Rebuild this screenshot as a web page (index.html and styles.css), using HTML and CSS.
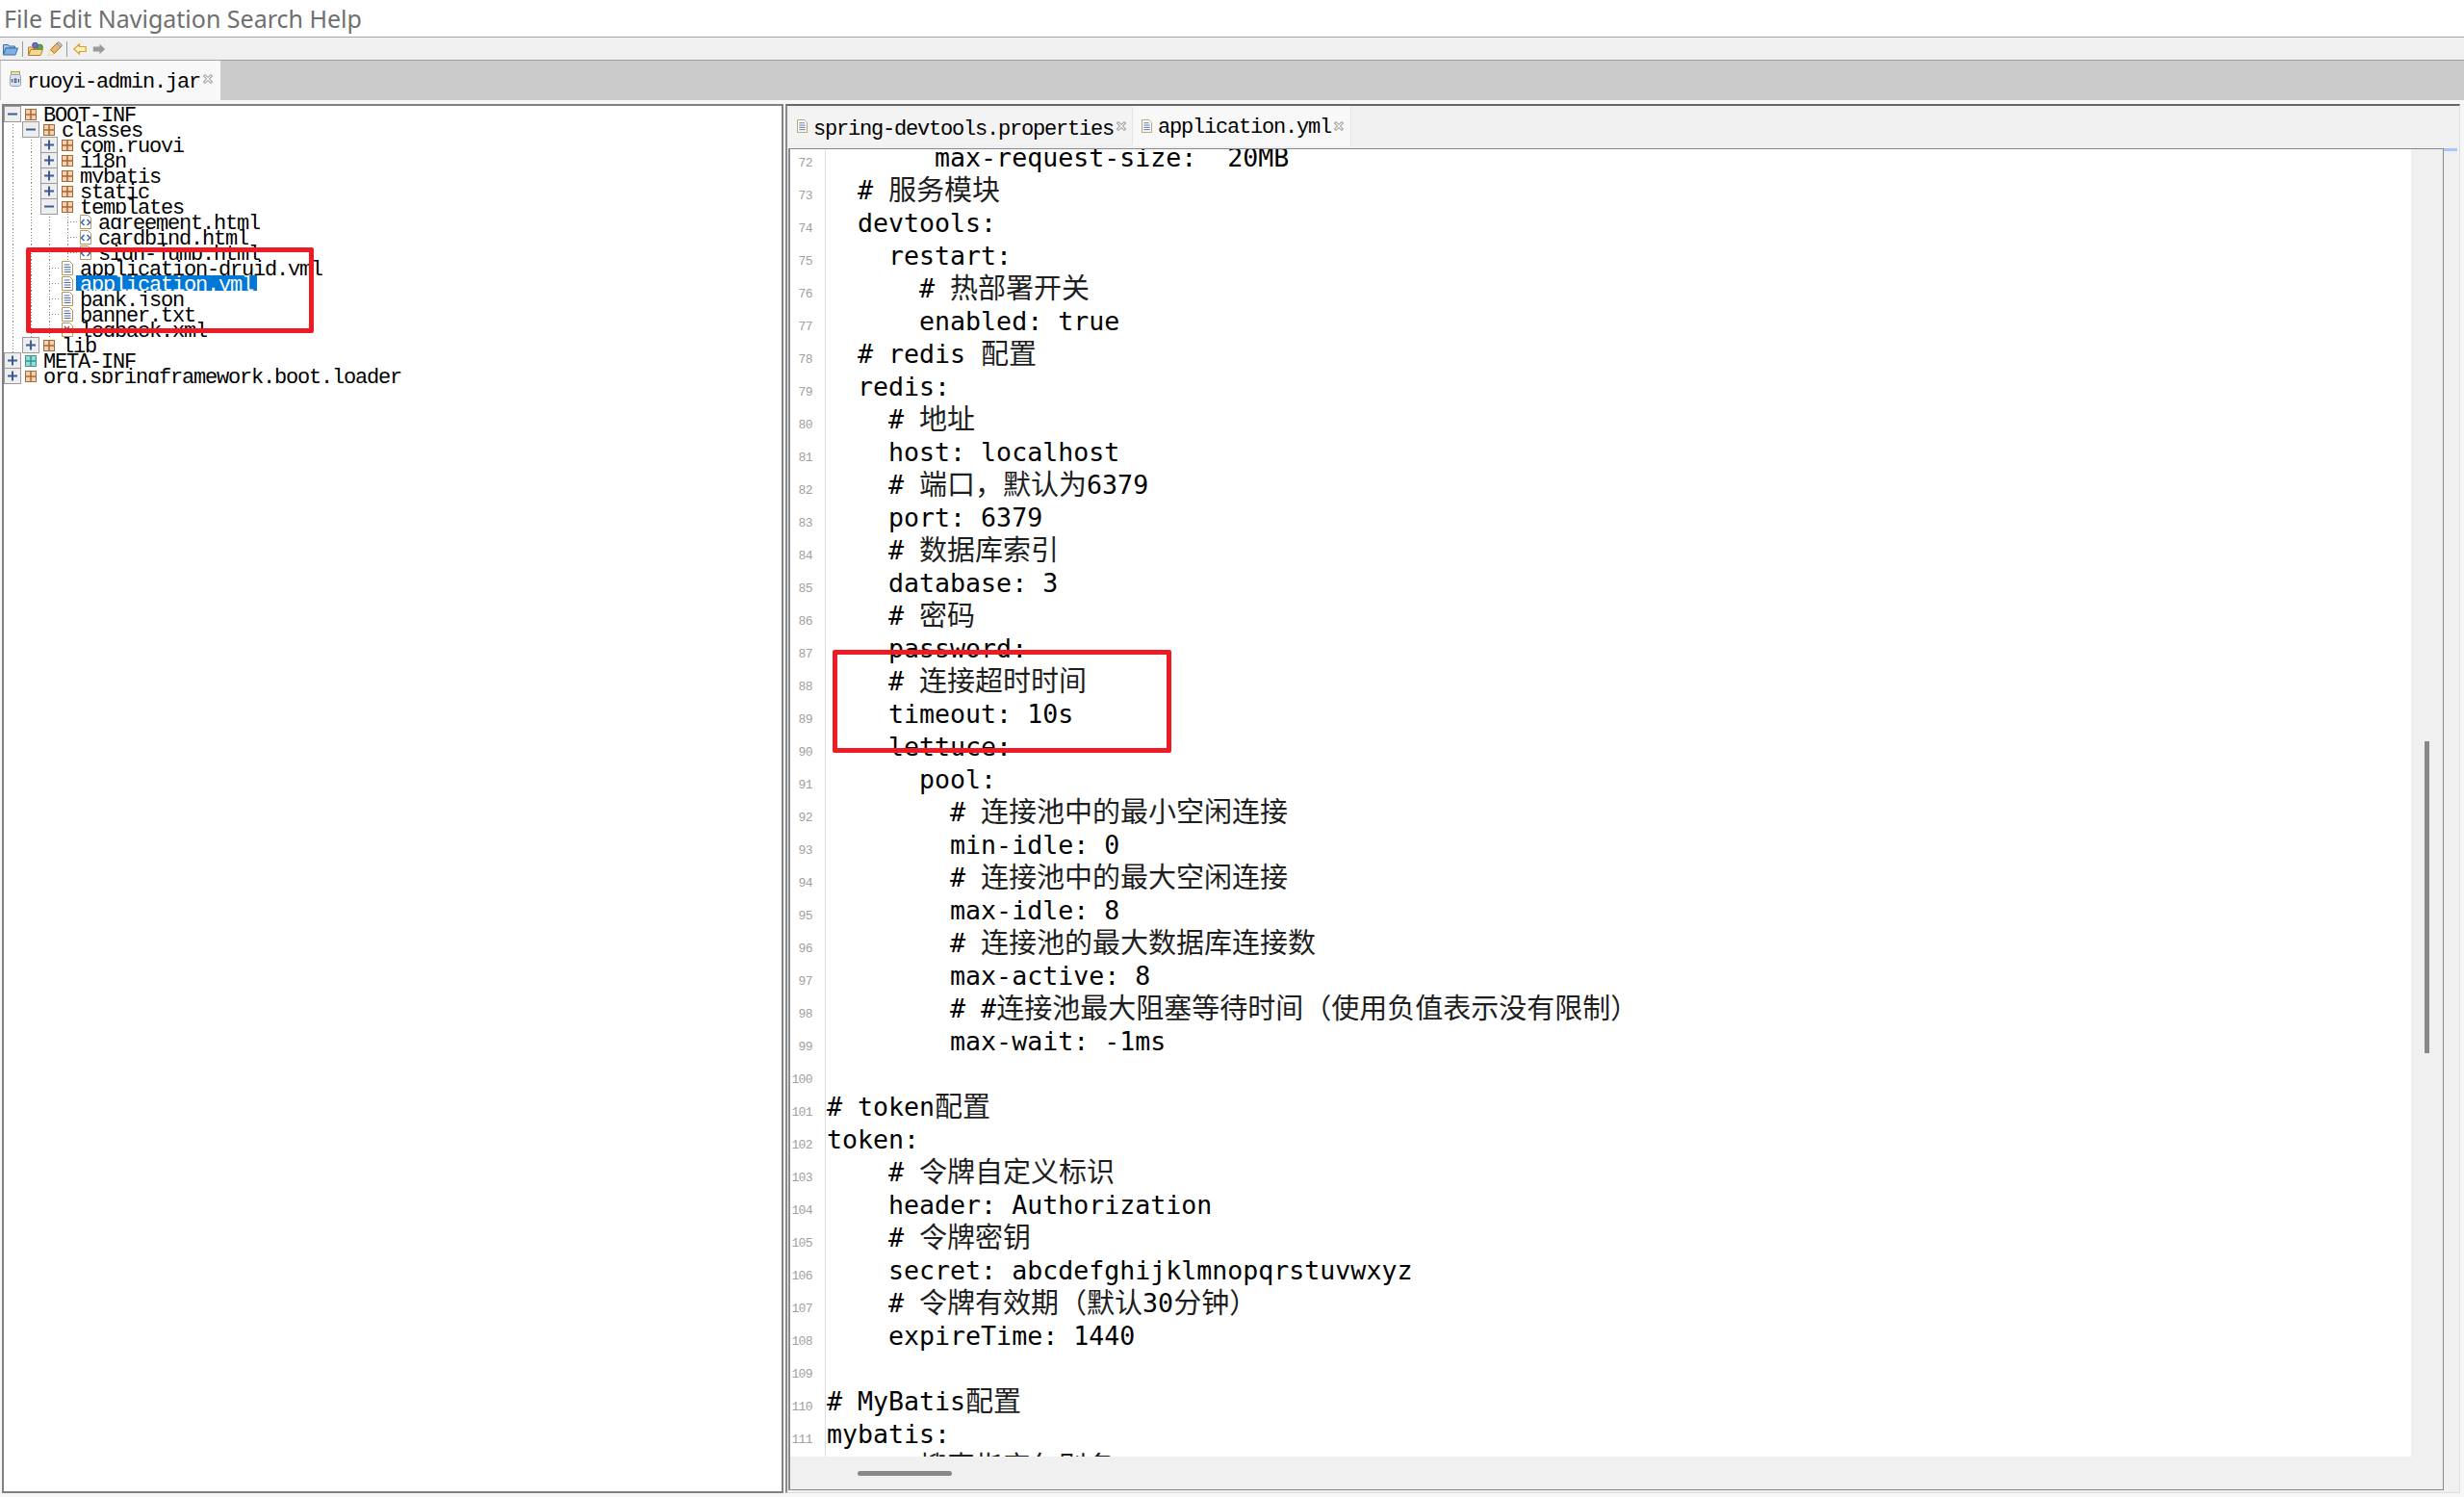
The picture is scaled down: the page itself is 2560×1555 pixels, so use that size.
FILE: index.html
```html
<!DOCTYPE html>
<html lang="zh">
<head>
<meta charset="utf-8">
<title>ruoyi-admin.jar</title>
<link rel="stylesheet" href="styles.css">
</head>
<body>
<svg class="defs" width="0" height="0" aria-hidden="true">
  <symbol id="pkg" viewBox="0 0 12 12"><rect x=".5" y=".5" width="11" height="11" fill="#f3d3ae" stroke="#a5683a"/><path d="M6 .5v11M.5 6h11" stroke="#a5683a" stroke-width="1.500"/></symbol>
  <symbol id="pkgt" viewBox="0 0 12 12"><rect x=".5" y=".5" width="11" height="11" fill="#8fded8" stroke="#3d938c"/><path d="M6 .5v11M.5 6h11" stroke="#3d938c" stroke-width="1.500"/></symbol>
  <symbol id="minus" viewBox="0 0 18 17"><rect x=".5" y=".5" width="17" height="16" fill="#eeeeee" stroke="#9a9a9a"/><path d="M4 8.500h10" stroke="#3d5a99" stroke-width="2"/></symbol>
  <symbol id="plus" viewBox="0 0 18 17"><rect x=".5" y=".5" width="17" height="16" fill="#eeeeee" stroke="#9a9a9a"/><path d="M4 8.500h10M9 3.500v10" stroke="#3d5a99" stroke-width="2"/></symbol>
  <symbol id="doc" viewBox="0 0 12 15"><path d="M.5.5h8l3 3v11H.5z" fill="#fff" stroke="#b39a5c"/><path d="M2.500 4h6M2.500 6.500h7M2.500 9h7M2.500 11.500h7" stroke="#4a6ab4"/></symbol>
  <symbol id="html" viewBox="0 0 12 15"><path d="M.5.5h8l3 3v11H.5z" fill="#fff" stroke="#b39a5c"/><path d="M4.500 5 1.500 8l3 3M7.500 5l3 3-3 3" fill="none" stroke="#2f6cb0" stroke-width="1.500"/></symbol>
  <symbol id="xml" viewBox="0 0 12 15"><path d="M.5.5h8l3 3v11H.5z" fill="#fff" stroke="#b39a5c"/><path d="M3 4l5 6M8 4l-5 6" stroke="#555" stroke-width="1.300"/></symbol>
  <symbol id="jar" viewBox="0 0 12 16"><rect x="1.500" y=".5" width="9" height="3" fill="#f2dfa8" stroke="#b99a55"/><rect x=".5" y="3.500" width="11" height="12" rx="2" fill="#d9e3f2" stroke="#8fa2bf"/><path d="M2.500 8v3.500M5 8h2v3.500H5zM9.500 8v3.500" fill="none" stroke="#3a4a66"/></symbol>
  <symbol id="x" viewBox="0 0 10 10"><path d="M.5 2 2 .5 5 3.500 8 .5 9.500 2 6.500 5 9.500 8 8 9.500 5 6.500 2 9.500 .5 8 3.500 5z" fill="#fff" stroke="#777"/></symbol>
</svg>

<div class="menubar">File Edit Navigation Search Help</div>

<div class="toolbar">
  <svg class="tool" viewBox="0 0 16 14"><path d="M.5 2.500h5l1 1.500h6v2H3L.5 13z" fill="#a8c6ea" stroke="#3c6ea8"/><path d="M3 6h12.500l-2.500 7H.5z" fill="#7fb0e6" stroke="#3c6ea8"/></svg>
  <i class="sep"></i>
  <svg class="tool" viewBox="0 0 16 14"><circle cx="7.500" cy="3" r="2.800" fill="#7a6cc0" stroke="#4c4390"/><circle cx="12.500" cy="5" r="2.800" fill="#4fae5d" stroke="#2a7a3a"/><path d="M.5 5h4l1 1.500h4v1H3L.5 13z" fill="#f2cd82" stroke="#b07f28"/><path d="M3 7.500h12.500L13 13.500H.5z" fill="#f5d898" stroke="#b07f28"/></svg>
  <svg class="tool tool-b" viewBox="0 0 16 16"><path d="M1 15l2-6 4 4z" fill="#fff4c8" stroke="#e6d9a0"/><path d="M3.500 8.500 10 2l4 4-6.500 6.500z" fill="#e9b76a" stroke="#a9772b"/><path d="M10 2l2-1.500L15.500 4 14 6z" fill="#c9c9c9" stroke="#888"/></svg>
  <i class="sep"></i>
  <svg class="arrow" viewBox="0 0 14 12"><path d="M.8 6 6.500.8V3.500h6.700v5H6.500v2.700z" fill="#fff0c4" stroke="#d8a030" stroke-width="1.200"/></svg>
  <svg class="arrow arrow-next" viewBox="0 0 14 12"><path d="M13.200 6 7.500.8V3.500H.8v5h6.700v2.700z" fill="#9a9a9a"/></svg>
</div>

<div class="tabbar">
  <div class="jar-tab">
    <svg class="ic-jar"><use href="#jar"/></svg>
    <span class="mono">ruoyi-admin.jar</span>
    <svg class="ic-x"><use href="#x"/></svg>
  </div>
</div>

<div class="workspace">
  <div class="tree">
    <div class="row"><span class="tw"><svg class="exp"><use href="#minus"/></svg></span><svg class="ic"><use href="#pkg"/></svg><span class="lbl">BOOT-INF</span></div>
    <div class="row"><i class="ind g"></i><span class="tw"><svg class="exp"><use href="#minus"/></svg></span><svg class="ic"><use href="#pkg"/></svg><span class="lbl">classes</span></div>
    <div class="row"><i class="ind g"></i><i class="ind g"></i><span class="tw"><svg class="exp"><use href="#plus"/></svg></span><svg class="ic"><use href="#pkg"/></svg><span class="lbl">com.ruoyi</span></div>
    <div class="row"><i class="ind g"></i><i class="ind g"></i><span class="tw"><svg class="exp"><use href="#plus"/></svg></span><svg class="ic"><use href="#pkg"/></svg><span class="lbl">i18n</span></div>
    <div class="row"><i class="ind g"></i><i class="ind g"></i><span class="tw"><svg class="exp"><use href="#plus"/></svg></span><svg class="ic"><use href="#pkg"/></svg><span class="lbl">mybatis</span></div>
    <div class="row"><i class="ind g"></i><i class="ind g"></i><span class="tw"><svg class="exp"><use href="#plus"/></svg></span><svg class="ic"><use href="#pkg"/></svg><span class="lbl">static</span></div>
    <div class="row"><i class="ind g"></i><i class="ind g"></i><span class="tw"><svg class="exp"><use href="#minus"/></svg></span><svg class="ic"><use href="#pkg"/></svg><span class="lbl">templates</span></div>
    <div class="row"><i class="ind g"></i><i class="ind g"></i><i class="ind g"></i><span class="tw conn"></span><svg class="fi"><use href="#html"/></svg><span class="lbl">agreement.html</span></div>
    <div class="row"><i class="ind g"></i><i class="ind g"></i><i class="ind g"></i><span class="tw conn"></span><svg class="fi"><use href="#html"/></svg><span class="lbl">cardbind.html</span></div>
    <div class="row"><i class="ind g"></i><i class="ind g"></i><i class="ind g"></i><span class="tw conn"></span><svg class="fi"><use href="#html"/></svg><span class="lbl">sign-jump.html</span></div>
    <div class="row"><i class="ind g"></i><i class="ind g"></i><span class="tw conn"></span><svg class="fi"><use href="#doc"/></svg><span class="lbl">application-druid.yml</span></div>
    <div class="row"><i class="ind g"></i><i class="ind g"></i><span class="tw conn"></span><svg class="fi"><use href="#doc"/></svg><span class="lbl sel">application.yml</span></div>
    <div class="row"><i class="ind g"></i><i class="ind g"></i><span class="tw conn"></span><svg class="fi"><use href="#doc"/></svg><span class="lbl">bank.json</span></div>
    <div class="row"><i class="ind g"></i><i class="ind g"></i><span class="tw conn"></span><svg class="fi"><use href="#doc"/></svg><span class="lbl">banner.txt</span></div>
    <div class="row"><i class="ind g"></i><i class="ind g"></i><span class="tw conn"></span><svg class="fi"><use href="#xml"/></svg><span class="lbl">logback.xml</span></div>
    <div class="row"><i class="ind g"></i><span class="tw"><svg class="exp"><use href="#plus"/></svg></span><svg class="ic"><use href="#pkg"/></svg><span class="lbl">lib</span></div>
    <div class="row"><span class="tw"><svg class="exp"><use href="#plus"/></svg></span><svg class="ic"><use href="#pkgt"/></svg><span class="lbl">META-INF</span></div>
    <div class="row"><span class="tw"><svg class="exp"><use href="#plus"/></svg></span><svg class="ic"><use href="#pkg"/></svg><span class="lbl">org.springframework.boot.loader</span></div>
  </div>

  <div class="editor-pane">
    <div class="ed-tabs">
      <div class="ed-tab">
        <svg class="ic-doc"><use href="#doc"/></svg>
        <span class="mono">spring-devtools.properties</span>
        <svg class="ic-x"><use href="#x"/></svg>
      </div>
      <div class="ed-tab active">
        <svg class="ic-doc"><use href="#doc"/></svg>
        <span class="mono">application.yml</span>
        <svg class="ic-x"><use href="#x"/></svg>
      </div>
    </div>
    <div class="ed-wrap">
      <div class="frame">
        <div class="frame-main">
          <div class="lines">
            <div class="line"><span class="num">72</span><span class="code">       max-request-size:  20MB</span></div>
            <div class="line"><span class="num">73</span><span class="code">  # <span class="z">服务模块</span></span></div>
            <div class="line"><span class="num">74</span><span class="code">  devtools:</span></div>
            <div class="line"><span class="num">75</span><span class="code">    restart:</span></div>
            <div class="line"><span class="num">76</span><span class="code">      # <span class="z">热部署开关</span></span></div>
            <div class="line"><span class="num">77</span><span class="code">      enabled: true</span></div>
            <div class="line"><span class="num">78</span><span class="code">  # redis <span class="z">配置</span></span></div>
            <div class="line"><span class="num">79</span><span class="code">  redis:</span></div>
            <div class="line"><span class="num">80</span><span class="code">    # <span class="z">地址</span></span></div>
            <div class="line"><span class="num">81</span><span class="code">    host: localhost</span></div>
            <div class="line"><span class="num">82</span><span class="code">    # <span class="z">端口，默认为</span>6379</span></div>
            <div class="line"><span class="num">83</span><span class="code">    port: 6379</span></div>
            <div class="line"><span class="num">84</span><span class="code">    # <span class="z">数据库索引</span></span></div>
            <div class="line"><span class="num">85</span><span class="code">    database: 3</span></div>
            <div class="line"><span class="num">86</span><span class="code">    # <span class="z">密码</span></span></div>
            <div class="line"><span class="num">87</span><span class="code">    password:</span></div>
            <div class="line"><span class="num">88</span><span class="code">    # <span class="z">连接超时时间</span></span></div>
            <div class="line"><span class="num">89</span><span class="code">    timeout: 10s</span></div>
            <div class="line"><span class="num">90</span><span class="code">    lettuce:</span></div>
            <div class="line"><span class="num">91</span><span class="code">      pool:</span></div>
            <div class="line"><span class="num">92</span><span class="code">        # <span class="z">连接池中的最小空闲连接</span></span></div>
            <div class="line"><span class="num">93</span><span class="code">        min-idle: 0</span></div>
            <div class="line"><span class="num">94</span><span class="code">        # <span class="z">连接池中的最大空闲连接</span></span></div>
            <div class="line"><span class="num">95</span><span class="code">        max-idle: 8</span></div>
            <div class="line"><span class="num">96</span><span class="code">        # <span class="z">连接池的最大数据库连接数</span></span></div>
            <div class="line"><span class="num">97</span><span class="code">        max-active: 8</span></div>
            <div class="line"><span class="num">98</span><span class="code">        # #<span class="z">连接池最大阻塞等待时间（使用负值表示没有限制）</span></span></div>
            <div class="line"><span class="num">99</span><span class="code">        max-wait: -1ms</span></div>
            <div class="line"><span class="num">100</span><span class="code"></span></div>
            <div class="line"><span class="num">101</span><span class="code"># token<span class="z">配置</span></span></div>
            <div class="line"><span class="num">102</span><span class="code">token:</span></div>
            <div class="line"><span class="num">103</span><span class="code">    # <span class="z">令牌自定义标识</span></span></div>
            <div class="line"><span class="num">104</span><span class="code">    header: Authorization</span></div>
            <div class="line"><span class="num">105</span><span class="code">    # <span class="z">令牌密钥</span></span></div>
            <div class="line"><span class="num">106</span><span class="code">    secret: abcdefghijklmnopqrstuvwxyz</span></div>
            <div class="line"><span class="num">107</span><span class="code">    # <span class="z">令牌有效期（默认</span>30<span class="z">分钟）</span></span></div>
            <div class="line"><span class="num">108</span><span class="code">    expireTime: 1440</span></div>
            <div class="line"><span class="num">109</span><span class="code"></span></div>
            <div class="line"><span class="num">110</span><span class="code"># MyBatis<span class="z">配置</span></span></div>
            <div class="line"><span class="num">111</span><span class="code">mybatis:</span></div>
            <div class="line"><span class="num">112</span><span class="code">    # <span class="z">搜索指定包别名</span></span></div>
          </div>
          <div class="vscroll"><div class="vthumb"></div></div>
        </div>
        <div class="hscroll"><div class="hthumb"></div></div>
      </div>
      <div class="ruler"><div class="ruler-mark"></div></div>
    </div>
  </div>
</div>

<div class="mark mark-tree"></div>
<div class="mark mark-code"></div>
</body>
</html>
```

FILE: styles.css
```css
* { box-sizing: border-box; }
html, body { margin: 0; padding: 0; }
body {
  position: relative;
  width: 2560px;
  height: 1555px;
  overflow: hidden;
  background: #f7f7f7;
  font-family: "Liberation Mono", monospace;
  color: #000;
}
.defs { position: absolute; }

.menubar {
  height: 39px;
  padding-left: 4px;
  background: #fff;
  border-bottom: 1px solid #a6a6a6;
  font: 25px/38px "Noto Sans", "Open Sans", sans-serif;
  color: #6f6f6f;
}

.toolbar {
  display: flex;
  align-items: center;
  height: 24px;
  padding-left: 3px;
  background: #f0f0f0;
  border-bottom: 1px solid #a0a0a0;
}
.tool { width: 16px; height: 14px; flex: none; }
.tool-b { margin-left: 4px; height: 16px; }
.sep { width: 1px; height: 16px; margin: 0 5px 0 4px; background: #9a9a9a; flex: none; }
.arrow { width: 14px; height: 12px; flex: none; margin-left: 1px; }
.arrow-next { margin-left: 6px; }

.tabbar {
  height: 41px;
  padding-left: 1px;
  background: #cbcbcb;
}
.jar-tab {
  display: flex;
  align-items: center;
  width: 228px;
  height: 41px;
  padding-left: 9px;
  background: #f8f8f8;
}
.ic-jar { width: 12px; height: 16px; margin-right: 6px; margin-top: -3px; flex: none; }
.ic-x { width: 10px; height: 10px; margin-left: 3px; margin-top: -4px; flex: none; }
.mono {
  font-size: 22px;
  letter-spacing: -1.2px;
  line-height: 24px;
  white-space: pre;
  flex: none;
}
.jar-tab .mono { width: 180px; margin-top: 5px; }

.workspace {
  display: flex;
  height: 1451px;
  padding: 4px 4px 4px 2px;
  gap: 2px;
}

.tree {
  width: 812px;
  flex: none;
  background: #fff;
  border: 2px solid #808080;
  overflow: hidden;
}
.row {
  display: flex;
  align-items: flex-start;
  height: 16px;
}
.ind {
  width: 19px;
  height: 16px;
  flex: none;
}
.ind.g {
  background: repeating-linear-gradient(#8a8a8a 0 1px, transparent 1px 3px) 9px 0 / 1px 100% no-repeat;
}
.tw {
  display: block;
  width: 22px;
  height: 16px;
  flex: none;
}
.tw.conn {
  background:
    repeating-linear-gradient(#8a8a8a 0 1px, transparent 1px 3px) 9px 0 / 1px 100% no-repeat,
    repeating-linear-gradient(90deg, #8a8a8a 0 1px, transparent 1px 3px) 9px 8px / 11px 1px no-repeat;
}
.exp { display: block; width: 18px; height: 17px; position: relative; z-index: 1; }
.ic { width: 12px; height: 12px; margin: 3px 7px 0 0; flex: none; }
.fi { width: 12px; height: 15px; margin: 1px 7px 0 0; flex: none; }
.lbl {
  display: block;
  height: 16px;
  overflow: hidden;
  font-size: 22px;
  letter-spacing: -1.2px;
  line-height: 21px;
  white-space: pre;
}
.lbl.sel {
  margin-left: -4px;
  padding: 0 4px;
  background: #0078d7;
  color: #fff;
}

.editor-pane {
  flex: 1;
  display: flex;
  flex-direction: column;
  min-width: 0;
  background: #f0f0f0;
  border-top: 2px solid #666;
  border-left: 2px solid #8a8a8a;
  border-right: 1px solid #ddd;
  border-bottom: 1px solid #ddd;
}
.ed-tabs {
  display: flex;
  align-items: flex-start;
  height: 44px;
  padding-left: 2px;
  flex: none;
}
.ed-tab {
  display: flex;
  align-items: center;
  height: 38px;
  margin-top: 2px;
  padding: 0 5px 0 8px;
  background: #f3f3f3;
  border-right: 1px solid #e4e4e4;
  width: 357px;
}
.ed-tab .mono { margin-top: 8px; margin-left: -1px; }
.ed-tab.active {
  width: 227px;
  height: 42px;
  margin-top: 0;
  padding-left: 9px;
  background: #f8f8f8;
}
.ed-tab.active .mono { margin-top: 4px; }
.ic-doc { width: 11px; height: 14px; margin-right: 7px; flex: none; }
.ed-tab .ic-x { margin-left: 3px; margin-top: 0; }

.ed-wrap {
  flex: 1;
  display: flex;
  min-height: 0;
  margin: 0 2px 2px 1px;
}
.frame {
  flex: 1;
  display: flex;
  flex-direction: column;
  min-width: 0;
  border-top: 1px solid #858a90;
  border-left: 2px solid #858a90;
  border-right: 1px solid #858a90;
  border-bottom: 1px solid #858a90;
  background: #f0f0f0;
}
.frame-main {
  flex: 1;
  display: flex;
  min-height: 0;
}
.lines {
  flex: 1;
  min-width: 0;
  overflow: hidden;
  background: #fff;
}
.line {
  display: flex;
  height: 34px;
}
.line:first-child { margin-top: -8px; }
.num {
  width: 37px;
  height: 34px;
  flex: none;
  padding: 6px 13px 0 0;
  border-right: 1px solid #dedede;
  font: 13px/34px "Liberation Mono", monospace;
  letter-spacing: -0.6px;
  text-align: right;
  color: #a0a0a0;
}
.code {
  padding-left: 1px;
  font-family: "DejaVu Sans Mono", monospace;
  font-size: 26.6px;
  line-height: 34px;
  white-space: pre;
}
.z {
  font-family: "Noto Sans CJK SC", sans-serif;
  font-size: 29px;
  line-height: 0;
  vertical-align: -1px;
  color: #1e1e1e;
}
.vscroll {
  width: 33px;
  flex: none;
  background: #f0f0f0;
}
.vthumb {
  width: 5px;
  height: 324px;
  margin: 615px 0 0 14px;
  background: #888;
}
.hscroll {
  height: 34px;
  flex: none;
  padding: 15px 0 0 70px;
  background: #f0f0f0;
}
.hthumb {
  width: 98px;
  height: 5px;
  border-radius: 3px;
  background: #888;
}
.ruler {
  width: 14px;
  flex: none;
  background: #f0f0f0;
}
.ruler-mark {
  height: 3px;
  background: #a6c8ff;
}

.mark {
  position: absolute;
  border: 5px solid #ed1c24;
  border-radius: 2px;
}
.mark-tree { left: 27px; top: 257px; width: 299px; height: 89px; }
.mark-code { left: 865px; top: 675px; width: 352px; height: 107px; }
```
